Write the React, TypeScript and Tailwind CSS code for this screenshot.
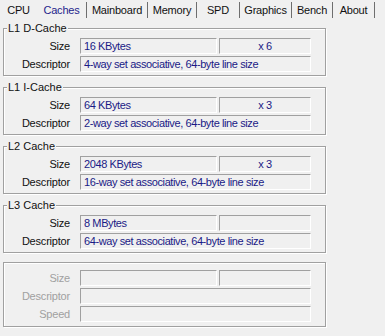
import React from 'react'

// ─── Data ──────────────────────────────────────────────────────────
const tabs = [
  { label: 'CPU', w: 'w-[37px]', sep: false },
  { label: 'Caches', w: 'w-[50px]', sep: true, active: true },
  { label: 'Mainboard', w: 'w-[61px]', sep: true },
  { label: 'Memory', w: 'w-[49px]', sep: true },
  { label: 'SPD', w: 'w-[43px]', sep: true },
  { label: 'Graphics', w: 'w-[52px]', sep: true },
  { label: 'Bench', w: 'w-[41px]', sep: true },
  { label: 'About', w: 'w-[42px]', sep: true },
]

const caches = [
  { title: 'L1 D-Cache', size: '16 KBytes', count: 'x 6', desc: '4-way set associative, 64-byte line size' },
  { title: 'L1 I-Cache', size: '64 KBytes', count: 'x 3', desc: '2-way set associative, 64-byte line size' },
  { title: 'L2 Cache', size: '2048 KBytes', count: 'x 3', desc: '16-way set associative, 64-byte line size' },
  { title: 'L3 Cache', size: '8 MBytes', count: '', desc: '64-way set associative, 64-byte line size' },
]

// ─── Sunken text field ─────────────────────────────────────────────
function Field({ children, className = '', center = false }: { children?: React.ReactNode; className?: string; center?: boolean }) {
  return (
    <div
      className={`h-[16px] border border-t-[#a0a0a0] border-l-[#a0a0a0] border-b-white border-r-white leading-[14px] tracking-[-0.4px] text-[#1a1a86] whitespace-nowrap overflow-hidden ${
        center ? 'text-center' : 'pl-[3px]'
      } ${className}`}
    >
      {children}
    </div>
  )
}

function Row({ label, disabled, children }: { label: string; disabled?: boolean; children: React.ReactNode }) {
  return (
    <div className="flex items-center h-[16px]">
      <div className={`w-[66px] text-right leading-[14px] tracking-[-0.2px] ${disabled ? 'text-[#a0a0a0]' : 'text-[#111]'}`}>{label}</div>
      <div className="ml-[10px] w-[231px] flex gap-[2px]">{children}</div>
    </div>
  )
}

export default function App() {
  return (
    <div className="w-[385px] h-[336px] bg-[#f0f0f0] overflow-hidden font-['Liberation_Sans',Arial,sans-serif] text-[11px] text-[#111]">
      {/* Tabs */}
      <div className="flex h-[19px] pt-[2px]">
        {tabs.map((t) => (
          <div
            key={t.label}
            className={`${t.w} h-[16px] flex items-center justify-center leading-[14px] tracking-[-0.2px] ${
              t.sep ? 'border-r border-[#6e6e6e]' : ''
            } ${t.active ? 'text-[#1e1e8c]' : 'text-[#111]'}`}
          >
            {t.label}
          </div>
        ))}
      </div>

      {/* Cache groups */}
      <div className="flex flex-col gap-[5px] mt-[3px] ml-[3px]">
        {caches.map((c) => (
          <fieldset
            key={c.title}
            className="w-[323px] border border-[#a0a0a0] shadow-[inset_1px_1px_0_#fff,1px_1px_0_#fff] px-0 pt-[3px] pb-[3px] flex flex-col gap-[2px]"
          >
            <legend className="ml-[3px] px-[1px] leading-[13px] bg-[#f0f0f0]">{c.title}</legend>
            <Row label="Size">
              <Field className="w-[137px]">{c.size}</Field>
              <Field className="flex-1" center>{c.count}</Field>
            </Row>
            <Row label="Descriptor">
              <Field className="flex-1">{c.desc}</Field>
            </Row>
          </fieldset>
        ))}

        {/* Empty trace cache group */}
        <div className="w-[323px] mt-[4px] border border-[#a0a0a0] shadow-[inset_1px_1px_0_#fff,1px_1px_0_#fff] pt-[7px] pb-[4px] flex flex-col gap-[2px]">
          <Row label="Size" disabled>
            <Field className="w-[137px]" />
            <Field className="flex-1" />
          </Row>
          <Row label="Descriptor" disabled>
            <Field className="flex-1" />
          </Row>
          <Row label="Speed" disabled>
            <Field className="flex-1" />
          </Row>
        </div>
      </div>
    </div>
  )
}
